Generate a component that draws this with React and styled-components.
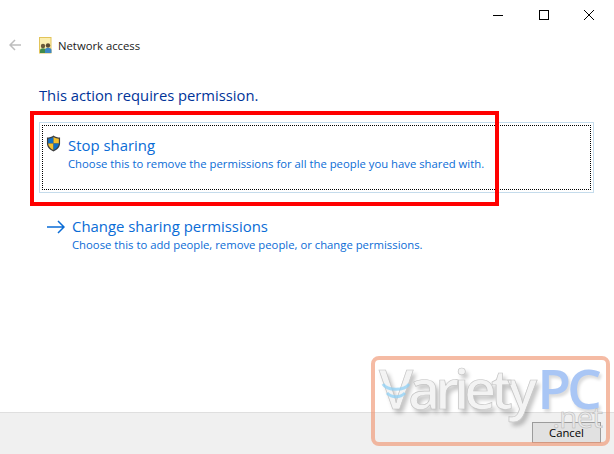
import React from "react";
import styled, { createGlobalStyle } from "styled-components";

const GlobalStyle = createGlobalStyle`
  html, body {
    margin: 0;
    padding: 0;
    background: #fff;
    overflow: hidden;
  }
`;

const Window = styled.div`
  position: relative;
  width: 614px;
  height: 454px;
  display: flex;
  flex-direction: column;
  overflow: hidden;
  background: #fff;
  font-family: "Open Sans", "Noto Sans", sans-serif;
`;

/* title bar */
const TitleBar = styled.div`
  height: 30px;
  display: flex;
  justify-content: flex-end;
  padding-right: 2px;
`;

const CaptionButton = styled.div`
  width: 45.5px;
  height: 30px;
  display: flex;
  align-items: center;
  justify-content: center;
`;

const NavRow = styled.div`
  height: 30px;
  display: flex;
  align-items: center;
  padding-left: 9px;
`;

const BackIcon = styled.svg`
  width: 12px;
  height: 12px;
  margin-right: 18px;
`;

const NavTitle = styled.span`
  margin-left: 6px;
  font-size: 11.3px;
  color: #1a1a1a;
`;

/* main content */
const Content = styled.div`
  flex: 1;
  padding: 24px 20px 0 39px;
  display: flex;
  flex-direction: column;
`;

const Heading = styled.h1`
  margin: 0;
  height: 22px;
  font-size: 14.75px;
  line-height: 22px;
  font-weight: 400;
  color: #003399;
`;

const Option = styled.div`
  box-sizing: border-box;
  height: ${(p) => (p.$focused ? "71px" : "auto")};
  margin-top: ${(p) => (p.$focused ? "16px" : "13px")};
  padding: 2px;
  border: ${(p) => (p.$focused ? "1px solid #c5dcec" : "1px solid transparent")};
`;

const dottedEdges = `
  background-image:
    linear-gradient(to right, #000 50%, transparent 50%),
    linear-gradient(to right, #000 50%, transparent 50%),
    linear-gradient(to bottom, #000 50%, transparent 50%),
    linear-gradient(to bottom, #000 50%, transparent 50%);
  background-size: 2px 1px, 2px 1px, 1px 2px, 1px 2px;
  background-position: 0 0, 0 100%, 0 0, 100% 0;
  background-repeat: repeat-x, repeat-x, repeat-y, repeat-y;
`;

const OptionInner = styled.div`
  box-sizing: border-box;
  height: 100%;
  display: flex;
  align-items: flex-start;
  padding: ${(p) => (p.$focused ? "10px 0 0 4px" : "7px 0 0 5px")};
  ${(p) => (p.$focused ? dottedEdges : "")}
`;

const OptionIcon = styled.svg`
  flex: none;
  width: ${(p) => p.$w}px;
  height: ${(p) => p.$h}px;
  margin-right: ${(p) => p.$gap}px;
  margin-top: ${(p) => p.$top}px;
`;

const OptionText = styled.div`
  display: flex;
  flex-direction: column;
`;

const OptionTitle = styled.div`
  font-size: 14.9px;
  line-height: 21px;
  color: #0a6cd6;
`;

const OptionDesc = styled.div`
  font-size: 11.3px;
  line-height: 16px;
  color: #0a6cd6;
`;

/* footer */
const Footer = styled.div`
  box-sizing: border-box;
  height: 42px;
  display: flex;
  justify-content: flex-end;
  align-items: flex-start;
  padding: 9px 13px 0 0;
  background: #f0f0f0;
  border-top: 1px solid #dfdfdf;
`;

const CancelButton = styled.button`
  box-sizing: border-box;
  width: 69px;
  height: 21px;
  padding: 0;
  border: 1px solid #9c9c9c;
  background: #e1e1e1;
  font-family: inherit;
  font-size: 11.3px;
  line-height: 17px;
  color: #000;
`;

/* overlays that sit on top of the screenshot */
const Highlight = styled.div`
  position: absolute;
  box-sizing: border-box;
  left: 30px;
  top: 111px;
  width: 469px;
  height: 95px;
  border: 4px solid #ff0000;
`;

const Watermark = styled.div`
  position: absolute;
  box-sizing: border-box;
  left: 371px;
  top: 356px;
  width: 239px;
  height: 90px;
  border: 4px solid rgba(240, 150, 115, 0.65);
  border-radius: 8px;
`;

const MarkWord = styled.div`
  display: flex;
  align-items: baseline;
  padding: 0 0 0 4px;
  font-family: "Open Sans", sans-serif;
  line-height: 56px;
  font-weight: 600;
`;

const MarkLight = styled.span`
  font-size: 55px;
  letter-spacing: -5px;
  color: #f3f3f3;
  -webkit-text-stroke: 0.7px #c4c4c4;
  text-shadow: 3px 4px 4px rgba(0, 0, 0, 0.25);
`;

const MarkBlue = styled.span`
  margin-left: 5px;
  font-size: 55px;
  letter-spacing: -4px;
  color: #a9c6f5;
  text-shadow: 2px 3px 3px rgba(0, 0, 0, 0.14);
`;

const MarkNet = styled.span`
  position: absolute;
  right: 4px;
  bottom: 10px;
  font-size: 30px;
  line-height: 30px;
  letter-spacing: -1px;
  color: #e9e9e9;
  -webkit-text-stroke: 0.5px #b5b5b5;
`;

const MarkSwoosh = styled.svg`
  position: absolute;
  left: 6px;
  top: 18px;
  width: 30px;
  height: 26px;
`;

const Shield = () => (
  <OptionIcon $w={15} $h={17} $gap={7} $top={0} viewBox="0 0 16 18">
    <path d="M8 .5 C6 2 3.500 2.600 1 2.700 V9 C1 13 4 15.800 8 17.500 C12 15.800 15 13 15 9 V2.700 C12.500 2.600 10 2 8 .5Z" fill="#3f3f3f" />
    <path d="M8 2 C6.300 3.100 4.400 3.700 2.300 3.900 V9 H8Z" fill="#0f6fc6" />
    <path d="M8 2 C9.700 3.100 11.600 3.700 13.700 3.900 V9 H8Z" fill="#f5c02c" />
    <path d="M2.300 9 C2.500 12 4.700 14.600 8 16 V9Z" fill="#f5c02c" />
    <path d="M13.700 9 C13.500 12 11.300 14.600 8 16 V9Z" fill="#0f6fc6" />
  </OptionIcon>
);

const NetworkIcon = () => (
  <svg width="13" height="17" viewBox="0 0 13 17">
    <rect x="0.500" y="0.500" width="11.500" height="15.500" fill="#fbeeb0" stroke="#e2c45a" />
    <circle cx="4" cy="9" r="2.200" fill="#6b5a3a" />
    <path d="M1 16 V13.500 C1 12 2.500 11.300 4 11.300 C5.500 11.300 7 12 7 13.500 V16Z" fill="#3f8a4a" />
    <circle cx="9" cy="8.500" r="2.200" fill="#5d4a30" />
    <path d="M6 16 V13 C6 11.600 7.500 10.800 9 10.800 C10.500 10.800 12.500 11.600 12.500 13 V16Z" fill="#3d87c4" />
  </svg>
);

const App = () => {
  return (
    <Window>
      <GlobalStyle />
      <TitleBar>
        <CaptionButton>
          <svg width="10" height="10" viewBox="0 0 10 10">
            <path d="M0 5.500H10" stroke="#000" />
          </svg>
        </CaptionButton>
        <CaptionButton>
          <svg width="10" height="10" viewBox="0 0 10 10">
            <rect x="0.500" y="0.500" width="9" height="9" fill="none" stroke="#000" />
          </svg>
        </CaptionButton>
        <CaptionButton>
          <svg width="10" height="10" viewBox="0 0 10 10">
            <path d="M0 0L10 10M10 0L0 10" stroke="#000" strokeWidth="1" />
          </svg>
        </CaptionButton>
      </TitleBar>
      <NavRow>
        <BackIcon viewBox="0 0 12 12">
          <path d="M12 6H1M6 1L1 6L6 11" fill="none" stroke="#bdbdbd" strokeWidth="1.500" />
        </BackIcon>
        <NetworkIcon />
        <NavTitle>Network access</NavTitle>
      </NavRow>
      <Content>
        <Heading>This action requires permission.</Heading>
        <Option $focused>
          <OptionInner $focused>
            <Shield />
            <OptionText>
              <OptionTitle>Stop sharing</OptionTitle>
              <OptionDesc>Choose this to remove the permissions for all the people you have shared with.</OptionDesc>
            </OptionText>
          </OptionInner>
        </Option>
        <Option>
          <OptionInner>
            <OptionIcon $w={18} $h={14} $gap={7} $top={4} viewBox="0 0 18 14">
              <path d="M0 7H17M11 1L17 7L11 13" fill="none" stroke="#0a6cd6" strokeWidth="1.500" />
            </OptionIcon>
            <OptionText>
              <OptionTitle>Change sharing permissions</OptionTitle>
              <OptionDesc>Choose this to add people, remove people, or change permissions.</OptionDesc>
            </OptionText>
          </OptionInner>
        </Option>
      </Content>
      <Footer>
        <CancelButton>Cancel</CancelButton>
      </Footer>
      <Highlight />
      <Watermark>
        <MarkSwoosh viewBox="0 0 30 26">
          <path d="M2 6 C6 13 24 13 28 6" fill="none" stroke="#8fd0f5" strokeWidth="3" opacity="0.75" />
          <path d="M6 15 C11 20 19 20 24 15" fill="none" stroke="#8fd0f5" strokeWidth="3" opacity="0.75" />
        </MarkSwoosh>
        <MarkWord>
          <MarkLight>Variety</MarkLight>
          <MarkBlue>PC</MarkBlue>
        </MarkWord>
        <MarkNet>.net</MarkNet>
      </Watermark>
    </Window>
  );
};

export default App;
